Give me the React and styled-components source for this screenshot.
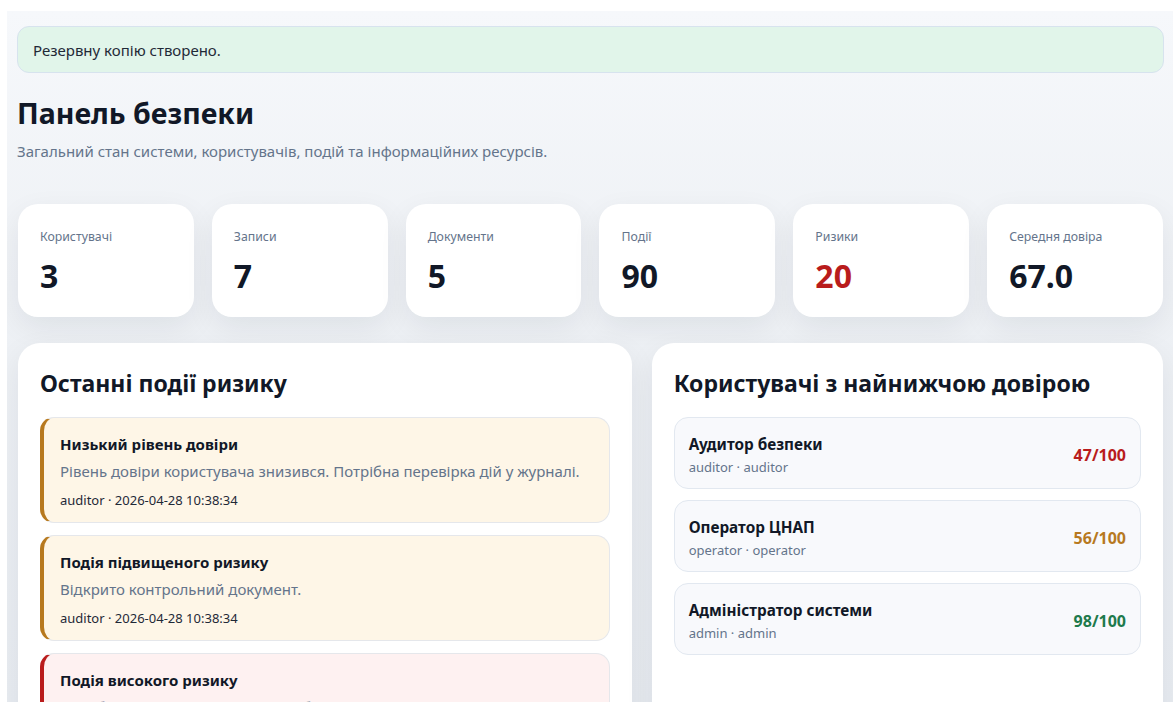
import React from "react";
import styled, { createGlobalStyle } from "styled-components";

const GlobalStyle = createGlobalStyle`
  html, body {
    margin: 0;
    padding: 0;
    background: #ffffff;
  }
  body {
    font-family: "Noto Sans", "Open Sans", sans-serif;
    color: #0f172a;
  }
  * {
    box-sizing: border-box;
  }
`;

const Page = styled.main`
  margin: 11px 0 0 7px;
  height: 691px;
  overflow: hidden;
  padding: 15px 9px 0 10px;
  background: linear-gradient(180deg, #f6f8fb 0%, #eef1f5 40%, #e8ecf1 100%);
`;

const Notice = styled.div`
  height: 47px;
  display: flex;
  align-items: center;
  padding: 0 15px;
  background: #e1f5ea;
  border: 1px solid #d7e3ee;
  border-radius: 12px;
  font-size: 15px;
  color: #1f2937;
`;

const Header = styled.header`
  padding: 22px 0 0;
  h1 {
    margin: 0;
    font-size: 28.5px;
    line-height: 36px;
    font-weight: 700;
    color: #111827;
  }
  p {
    margin: 9px 0 0;
    font-size: 15px;
    line-height: 22px;
    color: #64748b;
  }
`;

const Stats = styled.section`
  display: grid;
  grid-template-columns: repeat(6, 1fr);
  gap: 18px;
  margin: 42px 1px 0 1px;
`;

const StatCard = styled.div`
  height: 113px;
  padding: 24px 22px 0;
  background: #ffffff;
  border-radius: 20px;
  box-shadow: 0 10px 30px rgba(15, 23, 42, 0.07);
`;

const StatLabel = styled.div`
  font-size: 12.3px;
  line-height: 18px;
  color: #64748b;
`;

const StatValue = styled.div`
  margin-top: 10px;
  font-size: 32px;
  font-weight: 700;
  line-height: 40px;
  color: ${(p) => (p.$danger ? "#b91c1c" : "#111827")};
`;

const Columns = styled.section`
  display: grid;
  grid-template-columns: 1.2fr 1fr;
  gap: 20px;
  margin: 26px 1px 0 1px;
`;

const Panel = styled.div`
  min-height: 400px;
  padding: 24px 22px 22px;
  background: #ffffff;
  border-radius: 22px;
  box-shadow: 0 10px 30px rgba(15, 23, 42, 0.07);
  h2 {
    margin: 0 0 18px;
    font-size: 23px;
    line-height: 32px;
    font-weight: 700;
    color: #111827;
  }
`;

const List = styled.div`
  display: flex;
  flex-direction: column;
  gap: ${(p) => p.$gap}px;
`;

const levelColors = {
  medium: { bar: "#b7791f", bg: "#fef6e7" },
  high: { bar: "#b91c1c", bg: "#fef1f1" },
};

const EventItem = styled.div`
  padding: 15px 20px 13px 16px;
  background: ${(p) => levelColors[p.$level].bg};
  border: 1px solid #e5e7eb;
  border-left: 4px solid ${(p) => levelColors[p.$level].bar};
  border-radius: 14px;
`;

const EventTitle = styled.div`
  font-size: 15px;
  font-weight: 700;
  line-height: 22px;
  color: #111827;
`;

const EventText = styled.div`
  margin-top: 5px;
  font-size: 15px;
  line-height: 22px;
  color: #64748b;
`;

const EventMeta = styled.div`
  margin-top: 9px;
  font-size: 13px;
  line-height: 18px;
  color: #1f2937;
`;

const UserRow = styled.div`
  height: 72px;
  display: flex;
  align-items: center;
  justify-content: space-between;
  padding: 4px 14px 0;
  background: #f8f9fc;
  border: 1px solid #e2e8f0;
  border-radius: 14px;
`;

const UserName = styled.div`
  font-size: 15.3px;
  font-weight: 700;
  line-height: 22px;
  color: #111827;
`;

const UserLogin = styled.div`
  margin-top: 2px;
  font-size: 13px;
  line-height: 20px;
  color: #64748b;
`;

const scoreColors = { low: "#b91c1c", mid: "#b7791f", good: "#1e7a4c" };

const Score = styled.div`
  font-size: 16px;
  font-weight: 700;
  color: ${(p) => scoreColors[p.$tone]};
`;

const stats = [
  { label: "Користувачі", value: "3" },
  { label: "Записи", value: "7" },
  { label: "Документи", value: "5" },
  { label: "Події", value: "90" },
  { label: "Ризики", value: "20", danger: true },
  { label: "Середня довіра", value: "67.0" },
];

const events = [
  {
    level: "medium",
    title: "Низький рівень довіри",
    text: "Рівень довіри користувача знизився. Потрібна перевірка дій у журналі.",
    meta: "auditor · 2026-04-28 10:38:34",
  },
  {
    level: "medium",
    title: "Подія підвищеного ризику",
    text: "Відкрито контрольний документ.",
    meta: "auditor · 2026-04-28 10:38:34",
  },
  {
    level: "high",
    title: "Подія високого ризику",
    text: "Спроба доступу до документа з обмеженим грифом. Можлива загроза безпеці.",
    meta: "auditor · 2026-04-28 10:38:34",
  },
];

const users = [
  { name: "Аудитор безпеки", login: "auditor · auditor", score: 47, tone: "low" },
  { name: "Оператор ЦНАП", login: "operator · operator", score: 56, tone: "mid" },
  { name: "Адміністратор системи", login: "admin · admin", score: 98, tone: "good" },
];

export default function App() {
  return (
    <>
      <GlobalStyle />
      <Page>
        <Notice>Резервну копію створено.</Notice>
        <Header>
          <h1>Панель безпеки</h1>
          <p>Загальний стан системи, користувачів, подій та інформаційних ресурсів.</p>
        </Header>

        <Stats>
          {stats.map((s) => (
            <StatCard key={s.label}>
              <StatLabel>{s.label}</StatLabel>
              <StatValue $danger={s.danger}>{s.value}</StatValue>
            </StatCard>
          ))}
        </Stats>

        <Columns>
          <Panel>
            <h2>Останні події ризику</h2>
            <List $gap={12}>
              {events.map((e, i) => (
                <EventItem key={i} $level={e.level}>
                  <EventTitle>{e.title}</EventTitle>
                  <EventText>{e.text}</EventText>
                  <EventMeta>{e.meta}</EventMeta>
                </EventItem>
              ))}
            </List>
          </Panel>
          <Panel>
            <h2>Користувачі з найнижчою довірою</h2>
            <List $gap={11}>
              {users.map((u) => (
                <UserRow key={u.login}>
                  <div>
                    <UserName>{u.name}</UserName>
                    <UserLogin>{u.login}</UserLogin>
                  </div>
                  <Score $tone={u.tone}>{u.score}/100</Score>
                </UserRow>
              ))}
            </List>
          </Panel>
        </Columns>
      </Page>
    </>
  );
}
